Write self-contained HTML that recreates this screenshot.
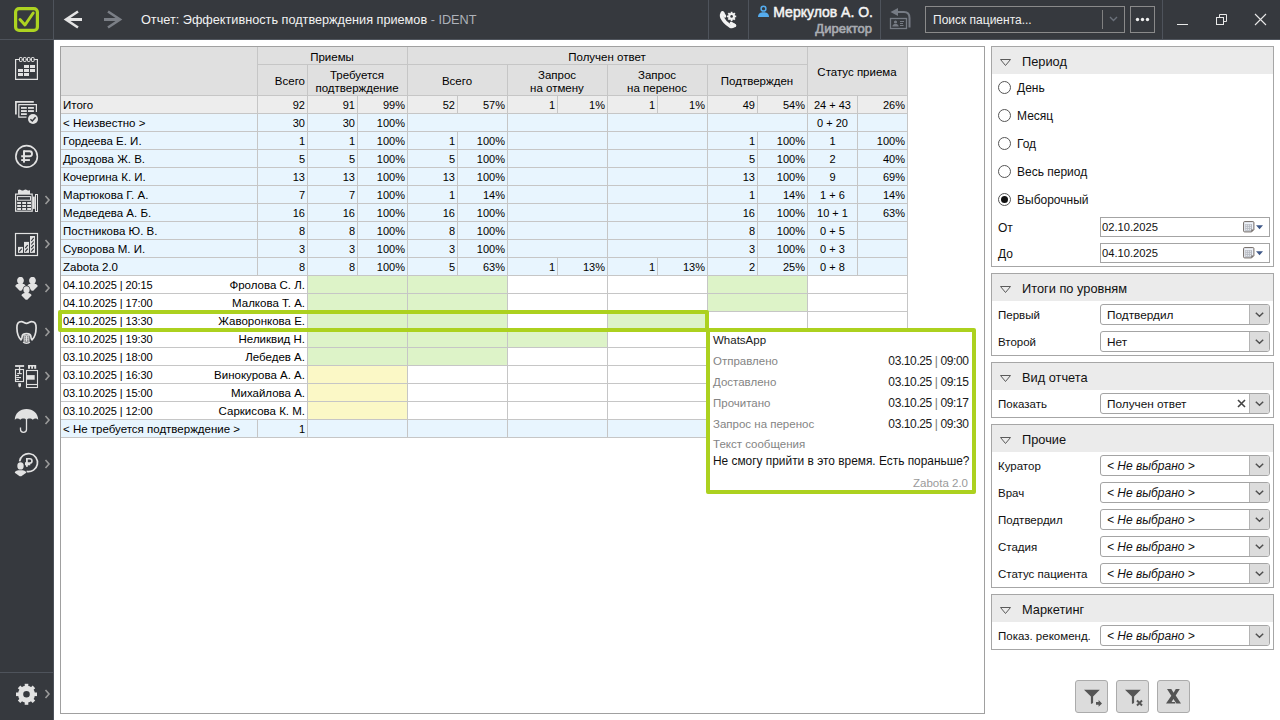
<!DOCTYPE html><html><head><meta charset="utf-8"><style>
*{box-sizing:border-box}
body{margin:0;width:1280px;height:720px;position:relative;overflow:hidden;background:#fff;font-family:"Liberation Sans",sans-serif;color:#000}
.ab{position:absolute}
.t{position:absolute;white-space:nowrap;font-size:11.5px;line-height:17px;height:17px}
.r{text-align:right}
.c{text-align:center}
.hl{position:absolute;height:1px;background:#c6c6c6}
.vl{position:absolute;width:1px;background:#c6c6c6}

</style></head><body>
<div class="ab" style="left:0;top:0;width:1280px;height:40px;background:#36393e"></div>
<div class="ab" style="left:0;top:39px;width:1280px;height:1px;background:#50555d"></div>
<div class="ab" style="left:0;top:40px;width:53px;height:680px;background:#36393e"></div>
<div class="ab" style="left:53px;top:0;width:1px;height:720px;background:#4e535b"></div>
<div class="ab" style="left:0;top:39px;width:53px;height:1px;background:#4e535b"></div>
<div class="ab" style="left:0;top:672px;width:53px;height:1px;background:#4e535b"></div>
<div class="ab" style="left:708px;top:0;width:1px;height:39px;background:#4e535b"></div>
<div class="ab" style="left:748px;top:0;width:1px;height:39px;background:#4e535b"></div>
<div class="ab" style="left:880px;top:0;width:1px;height:39px;background:#4e535b"></div>
<div class="ab" style="left:1162px;top:0;width:1px;height:39px;background:#4e535b"></div>
<svg class="ab" style="left:0;top:0" width="54" height="40" viewBox="0 0 54 40">
<rect x="15.6" y="8.6" width="21.8" height="21.8" rx="3.5" fill="none" stroke="#add321" stroke-width="3.2"/>
<path d="M20 19.5 L25 25 L33.2 13" fill="none" stroke="#add321" stroke-width="3" stroke-linecap="round" stroke-linejoin="round"/>
</svg>
<svg class="ab" style="left:54px;top:0" width="80" height="40" viewBox="54 0 80 40">
<path d="M78 11.5 L66 19.5 L78 27.5" fill="none" stroke="#e4e4e4" stroke-width="2.6"/>
<path d="M66 19.5 H82" stroke="#e4e4e4" stroke-width="3"/>
<path d="M108 11.5 L120 19.5 L108 27.5" fill="none" stroke="#7b7f86" stroke-width="2.6"/>
<path d="M104 19.5 H120" stroke="#7b7f86" stroke-width="3"/>
</svg>
<div class="ab" style="left:141px;top:12px;font-size:12.7px;line-height:17px;white-space:nowrap;color:#f2f2f2">Отчет: Эффективность подтверждения приемов <span style="color:#aeb2ba">- IDENT</span></div>
<svg class="ab" style="left:712px;top:4px" width="32" height="32" viewBox="0 0 32 32">
<path d="M10.8 9.2 C9.6 10.2 9.4 12 10 13.5 C11.5 16.5 14.5 19.8 17.8 21.8 C19.3 22.6 21 22.6 22.2 21.5" fill="none" stroke="#f2f2f2" stroke-width="3.6" stroke-linecap="round"/>
<path d="M10.2 8.6 L12.8 12.2 M22.8 21.6 L19.2 19.2" stroke="#f2f2f2" stroke-width="3" stroke-linecap="round"/>
<g fill="#f2f2f2" transform="translate(19.6 12.4)">
<circle r="3.4"/>
<rect x="-0.9" y="-4.6" width="1.8" height="9.2"/>
<rect x="-0.9" y="-4.6" width="1.8" height="9.2" transform="rotate(45)"/>
<rect x="-0.9" y="-4.6" width="1.8" height="9.2" transform="rotate(90)"/>
<rect x="-0.9" y="-4.6" width="1.8" height="9.2" transform="rotate(135)"/>
</g>
<circle cx="19.6" cy="12.4" r="1.3" fill="#36393e"/>
</svg>
<svg class="ab" style="left:756px;top:4px" width="16" height="15" viewBox="0 0 16 15">
<circle cx="7.5" cy="4.7" r="2.4" fill="none" stroke="#55acee" stroke-width="1.5"/>
<path d="M2 13 C2 9.5 4.5 8.3 7.5 8.3 C10.5 8.3 13 9.5 13 13 Z" fill="#55acee"/>
</svg>
<div class="ab" style="left:773px;top:3.5px;font-size:14px;line-height:17px;white-space:nowrap;color:#f4f4f4;width:100px;text-align:right;-webkit-text-stroke:0.5px #f4f4f4">Меркулов А. О.</div>
<div class="ab" style="left:772px;top:19.5px;font-size:13px;line-height:17px;white-space:nowrap;color:#a9acb2;width:100px;text-align:right;-webkit-text-stroke:0.6px #a9acb2">Директор</div>
<svg class="ab" style="left:884px;top:4px" width="32" height="32" viewBox="0 0 32 32">
<path d="M6.5 8 L14 4 L14 12 Z" fill="#767b84"/>
<path d="M13 8 H20 C23.5 8 25.5 10.5 25.5 14 V23.5" fill="none" stroke="#767b84" stroke-width="2"/>
<rect x="6.5" y="14.5" width="16" height="10" fill="none" stroke="#767b84" stroke-width="1.3"/>
<circle cx="11.5" cy="18" r="1.6" fill="#767b84"/>
<path d="M8.3 22.5 C8.5 20.5 10 20 11.5 20 C13 20 14.5 20.5 14.7 22.5 Z" fill="#767b84"/>
<path d="M16 17.5 H20 M16 19.5 H19 M16 21.5 H19.5" stroke="#767b84" stroke-width="1"/>
</svg>
<div class="ab" style="left:925px;top:6px;width:200px;height:27px;border:1px solid #8a8a8a"></div>
<div class="ab" style="left:933px;top:12px;font-size:12px;line-height:17px;white-space:nowrap;color:#f0f0f0">Поиск пациента...</div>
<div class="ab" style="left:1102px;top:10px;width:1px;height:19px;background:#808080"></div>
<svg class="ab" style="left:1108px;top:15px" width="12" height="8" viewBox="0 0 12 8"><path d="M2 2 L5.5 5.5 L9 2" fill="none" stroke="#6a707a" stroke-width="1.4"/></svg>
<div class="ab" style="left:1130px;top:6px;width:25px;height:27px;border:1px solid #8a8a8a"></div>
<svg class="ab" style="left:1130px;top:6px" width="25" height="27" viewBox="0 0 25 27">
<circle cx="7.5" cy="13.5" r="1.7" fill="#f0f0f0"/><circle cx="12.5" cy="13.5" r="1.7" fill="#f0f0f0"/><circle cx="17.5" cy="13.5" r="1.7" fill="#f0f0f0"/></svg>
<svg class="ab" style="left:1163px;top:0" width="117" height="39" viewBox="1163 0 117 39">
<path d="M1177 24.5 H1188" stroke="#e8e8e8" stroke-width="1"/>
<rect x="1216.5" y="17.5" width="7" height="7" fill="none" stroke="#e8e8e8" stroke-width="1"/>
<path d="M1219.5 17.5 V14.5 H1226.5 V21.5 H1223.5" fill="none" stroke="#e8e8e8" stroke-width="1"/>
<path d="M1255 14 L1266 25 M1266 14 L1255 25" stroke="#e8e8e8" stroke-width="1.1"/>
</svg>
<svg class="ab" style="left:0;top:46px" width="53" height="44" viewBox="0 46 53 44"><g fill="none" stroke="#e2e2e2">
<path d="M19 59.5 H15.6 V79.4 H37.4 V59.5 H34" stroke-width="1.2"/>
<rect x="19.5" y="57.5" width="2.6" height="4" rx="0.6" stroke-width="1"/>
<rect x="23.5" y="57.5" width="2.6" height="4" rx="0.6" stroke-width="1"/>
<rect x="27.5" y="57.5" width="2.6" height="4" rx="0.6" stroke-width="1"/>
<rect x="31.5" y="57.5" width="2.6" height="4" rx="0.6" stroke-width="1"/>
<path d="M22.1 59.5 H23.5 M26.1 59.5 H27.5 M30.1 59.5 H31.5" stroke-width="1"/>
</g>
<g fill="#e2e2e2">
<rect x="24" y="65" width="5" height="3"/><rect x="30" y="65" width="5" height="3"/>
<rect x="18" y="69" width="5" height="3"/><rect x="24" y="69" width="5" height="3"/><rect x="30" y="69" width="5" height="3"/>
<rect x="18" y="73" width="5" height="3"/><rect x="24" y="73" width="5" height="3"/>
</g></svg>
<svg class="ab" style="left:0;top:90px" width="53" height="44" viewBox="0 90 53 44"><path d="M15.9 114.6 V101.9 H33.8" fill="none" stroke="#e2e2e2" stroke-width="1.7"/>
<path d="M26.5 117.2 H18.8 V104.6 H36.4 V112" fill="none" stroke="#e2e2e2" stroke-width="1.2"/>
<g fill="#e2e2e2">
<rect x="21" y="107" width="5.8" height="1.8"/><rect x="28" y="107" width="5.9" height="1.8"/>
<rect x="21" y="110.1" width="5.8" height="1.9"/><rect x="28" y="110.1" width="5.9" height="1.9"/>
<rect x="21" y="113.2" width="5.8" height="1.8"/>
</g>
<circle cx="33" cy="119" r="5.6" fill="#36393e"/>
<circle cx="33" cy="119" r="5" fill="#e2e2e2"/>
<path d="M30.4 119.2 L32.3 121 L35.6 117.3" fill="none" stroke="#36393e" stroke-width="1.5"/></svg>
<svg class="ab" style="left:0;top:134px" width="53" height="44" viewBox="0 134 53 44"><circle cx="26.6" cy="156.4" r="10.75" fill="none" stroke="#e2e2e2" stroke-width="1.6"/>
<rect x="23" y="150.3" width="2" height="12.3" fill="#e2e2e2"/>
<path d="M24 151.25 H29.6 C31.2 151.25 32 152.4 32 153.75 C32 155.1 31.2 156.25 29.6 156.25 H21.2" fill="none" stroke="#e2e2e2" stroke-width="1.9"/>
<rect x="21.2" y="159.1" width="8.7" height="1.9" fill="#e2e2e2"/></svg>
<svg class="ab" style="left:0;top:178px" width="53" height="44" viewBox="0 178 53 44"><path d="M18 194 V190 Q19.5 188.8 21 190 Q22.5 191 24 190 Q25.5 188.8 27 190 Q28.5 191 30 190 V194 Z" fill="#e2e2e2"/>
<g fill="none" stroke="#e2e2e2">
<rect x="15.6" y="194.1" width="16.6" height="17.1" stroke-width="1.2"/>
<rect x="17.5" y="196.6" width="13" height="3.6" stroke-width="1"/>
<rect x="35.5" y="194.5" width="2" height="17" stroke-width="1"/>
</g>
<g fill="#e2e2e2">
<rect x="17.2" y="202" width="3.8" height="2"/><rect x="22.2" y="202" width="3.8" height="2"/><rect x="27.2" y="202" width="3.8" height="2"/>
<rect x="17.2" y="205" width="3.8" height="2"/><rect x="22.2" y="205" width="3.8" height="2"/><rect x="27.2" y="205" width="3.8" height="2"/>
<rect x="17.2" y="208" width="3.8" height="2"/><rect x="22.2" y="208" width="3.8" height="2"/><rect x="27.2" y="208" width="3.8" height="2"/>
<rect x="32.6" y="196.6" width="2.2" height="12.3"/>
</g></svg>
<svg class="ab" style="left:43px;top:193px" width="9" height="14" viewBox="0 0 9 14"><path d="M2.5 3 L6 7 L2.5 11" fill="none" stroke="#9a9a9a" stroke-width="1.6"/></svg>
<svg class="ab" style="left:0;top:222px" width="53" height="44" viewBox="0 222 53 44"><rect x="15.5" y="233.5" width="22" height="22" fill="none" stroke="#e2e2e2" stroke-width="1.2"/>
<rect x="18" y="246.9" width="5" height="6.0" fill="#e2e2e2"/>
<path d="M19.3 251.70 L21.7 248.70" stroke="#36393e" stroke-width="1.2"/>
<rect x="24" y="241.9" width="5" height="11.0" fill="#e2e2e2"/>
<path d="M25.3 251.70 L27.7 248.70 M25.3 248.10 L27.7 245.10" stroke="#36393e" stroke-width="1.2"/>
<rect x="30" y="236" width="5" height="16.9" fill="#e2e2e2"/>
<path d="M31.3 251.70 L33.7 248.70 M31.3 248.10 L33.7 245.10 M31.3 244.50 L33.7 241.50 M31.3 240.90 L33.7 237.90" stroke="#36393e" stroke-width="1.2"/></svg>
<svg class="ab" style="left:43px;top:237px" width="9" height="14" viewBox="0 0 9 14"><path d="M2.5 3 L6 7 L2.5 11" fill="none" stroke="#9a9a9a" stroke-width="1.6"/></svg>
<svg class="ab" style="left:0;top:266px" width="53" height="44" viewBox="0 266 53 44"><g fill="#e2e2e2"><ellipse cx="20.5" cy="280.5" rx="3.1" ry="3.5"/><path d="M15.5 286.3 C15.5 284.3 18.0 283.7 20.5 283.7 C23.0 283.7 25.5 284.3 25.5 286.3 L21.3 290.5 L19.7 290.5 Z"/><ellipse cx="20.5" cy="280.5" rx="3.1" ry="3.5"/><path d="M15.5 286.3 C15.5 284.3 18.0 283.7 20.5 283.7 C23.0 283.7 25.5 284.3 25.5 286.3 L21.3 290.5 L19.7 290.5 Z"/><ellipse cx="32.5" cy="280.5" rx="3.1" ry="3.5"/><path d="M27.5 286.3 C27.5 284.3 30.0 283.7 32.5 283.7 C35.0 283.7 37.5 284.3 37.5 286.3 L33.3 290.5 L31.7 290.5 Z"/><ellipse cx="32.5" cy="280.5" rx="3.1" ry="3.5"/><path d="M27.5 286.3 C27.5 284.3 30.0 283.7 32.5 283.7 C35.0 283.7 37.5 284.3 37.5 286.3 L33.3 290.5 L31.7 290.5 Z"/></g><g fill="#e2e2e2"><ellipse cx="26.5" cy="289.8" rx="3.1" ry="3.5" stroke="#36393e" stroke-width="1.6"/><path d="M21.5 295.6 C21.5 293.6 24.0 293.0 26.5 293.0 C29.0 293.0 31.5 293.6 31.5 295.6 L27.3 299.8 L25.7 299.8 Z" stroke="#36393e" stroke-width="1.6"/><ellipse cx="26.5" cy="289.8" rx="3.1" ry="3.5"/><path d="M21.5 295.6 C21.5 293.6 24.0 293.0 26.5 293.0 C29.0 293.0 31.5 293.6 31.5 295.6 L27.3 299.8 L25.7 299.8 Z"/></g></svg>
<svg class="ab" style="left:43px;top:281px" width="9" height="14" viewBox="0 0 9 14"><path d="M2.5 3 L6 7 L2.5 11" fill="none" stroke="#9a9a9a" stroke-width="1.6"/></svg>
<svg class="ab" style="left:0;top:310px" width="53" height="44" viewBox="0 310 53 44"><path d="M21 340 C19 338 17 333 16.9 328 C16.8 324 18 321.6 21.5 321.6 C23.5 321.6 24.5 323.4 26.5 323.4 C28.5 323.4 29.5 321.6 31.5 321.6 C35 321.6 36.2 324 36.1 328 C36 333 34 338 32 340 C31 339.5 30.9 337 30.8 336 C30.5 334.5 28.8 333.6 26.5 333.6 C24.2 333.6 22.5 334.5 22.2 336 C22.1 337 22 339.5 21 340 Z" fill="none" stroke="#e2e2e2" stroke-width="1.7" stroke-linejoin="round"/>
<rect x="23.6" y="335.2" width="5.8" height="6.6" fill="#e2e2e2"/>
<path d="M23.2 342 C24.5 343.6 28.5 343.6 29.8 342" fill="none" stroke="#e2e2e2" stroke-width="1.4"/>
<g fill="#36393e"><rect x="24.6" y="336.4" width="1.2" height="1"/><rect x="27.2" y="336.4" width="1.2" height="1"/>
<rect x="24.6" y="338.4" width="1.2" height="1"/><rect x="27.2" y="338.4" width="1.2" height="1"/>
<rect x="24.6" y="340.4" width="1.2" height="1"/><rect x="27.2" y="340.4" width="1.2" height="1"/></g></svg>
<svg class="ab" style="left:43px;top:325px" width="9" height="14" viewBox="0 0 9 14"><path d="M2.5 3 L6 7 L2.5 11" fill="none" stroke="#9a9a9a" stroke-width="1.6"/></svg>
<svg class="ab" style="left:0;top:354px" width="53" height="44" viewBox="0 354 53 44"><g fill="#e2e2e2">
<rect x="15.1" y="365.1" width="9" height="1.8"/>
<rect x="18.9" y="366.5" width="1.3" height="7"/>
<rect x="17.2" y="373" width="4.6" height="1.2"/>
<rect x="16.2" y="375" width="2.8" height="1.1"/><rect x="16.2" y="377" width="4.8" height="1.1"/><rect x="16.2" y="379" width="2.8" height="1.1"/>
<path d="M18.3 383.2 H21 V386.2 L19.65 387.6 L18.3 386.2 Z"/>
<path d="M28 365 H36.2 V368.8 H34.2 V366.6 H33 V368.8 H31.2 V366.6 H30 V368.8 H28 Z"/>
<rect x="27" y="375.1" width="7.7" height="4.6"/>
</g>
<g fill="none" stroke="#e2e2e2" stroke-width="1.1">
<rect x="15.5" y="369.5" width="8" height="12"/>
<rect x="26.5" y="370.5" width="11" height="17"/>
<path d="M26.5 384.5 H37.5"/>
</g></svg>
<svg class="ab" style="left:43px;top:369px" width="9" height="14" viewBox="0 0 9 14"><path d="M2.5 3 L6 7 L2.5 11" fill="none" stroke="#9a9a9a" stroke-width="1.6"/></svg>
<svg class="ab" style="left:0;top:398px" width="53" height="44" viewBox="0 398 53 44"><path d="M14.8 420 C14.8 413.5 20 409.1 26.5 409.1 C33 409.1 38.2 413.5 38.2 420 C36.8 418.2 34.3 418 32.8 419.8 C31.3 417.9 28 417.9 26.5 419.8 C25 417.9 21.7 417.9 20.2 419.8 C18.7 418 16.2 418.2 14.8 420 Z" fill="#e2e2e2"/>
<path d="M26.5 419 V429.5 C26.5 431.5 25 432.3 23.5 432.3 C22 432.3 20.5 431.5 20.5 429.5 V427.5" fill="none" stroke="#e2e2e2" stroke-width="1.3"/></svg>
<svg class="ab" style="left:43px;top:413px" width="9" height="14" viewBox="0 0 9 14"><path d="M2.5 3 L6 7 L2.5 11" fill="none" stroke="#9a9a9a" stroke-width="1.6"/></svg>
<svg class="ab" style="left:0;top:442px" width="53" height="44" viewBox="0 442 53 44"><path d="M19.59 461.35 A9.0 9.0 0 1 1 26.63 471.40" fill="none" stroke="#e2e2e2" stroke-width="1.7"/>
<rect x="26" y="458" width="1.8" height="8.8" fill="#e2e2e2"/>
<path d="M26.5 458.8 H29.7 C31.3 458.8 32 459.8 32 460.95 C32 462.1 31.3 463.1 29.7 463.1 H25" fill="none" stroke="#e2e2e2" stroke-width="1.6"/>
<rect x="25" y="463.9" width="5.3" height="1.4" fill="#e2e2e2"/>
<ellipse cx="20.5" cy="465.9" rx="3.2" ry="3.6" fill="#e2e2e2"/>
<path d="M14.8 472.8 C14.8 470.8 17.5 470.2 20.5 470.2 C23.5 470.2 26.2 470.8 26.2 472.8 L21.3 476.2 L19.7 476.2 Z" fill="#e2e2e2"/></svg>
<svg class="ab" style="left:43px;top:457px" width="9" height="14" viewBox="0 0 9 14"><path d="M2.5 3 L6 7 L2.5 11" fill="none" stroke="#9a9a9a" stroke-width="1.6"/></svg>
<svg class="ab" style="left:0;top:672px" width="53" height="48" viewBox="0 672 53 48">
<g fill="#e2e2e2"><rect x="24.7" y="683.8" width="3.6" height="3.5" transform="rotate(0 26.5 694.3)"/><rect x="24.7" y="683.8" width="3.6" height="3.5" transform="rotate(45 26.5 694.3)"/><rect x="24.7" y="683.8" width="3.6" height="3.5" transform="rotate(90 26.5 694.3)"/><rect x="24.7" y="683.8" width="3.6" height="3.5" transform="rotate(135 26.5 694.3)"/><rect x="24.7" y="683.8" width="3.6" height="3.5" transform="rotate(180 26.5 694.3)"/><rect x="24.7" y="683.8" width="3.6" height="3.5" transform="rotate(225 26.5 694.3)"/><rect x="24.7" y="683.8" width="3.6" height="3.5" transform="rotate(270 26.5 694.3)"/><rect x="24.7" y="683.8" width="3.6" height="3.5" transform="rotate(315 26.5 694.3)"/></g>
<circle cx="26.5" cy="694.3" r="5.9" fill="none" stroke="#e2e2e2" stroke-width="5.2"/>
</svg>
<svg class="ab" style="left:43px;top:687px" width="9" height="14" viewBox="0 0 9 14"><path d="M2.5 3 L6 7 L2.5 11" fill="none" stroke="#9a9a9a" stroke-width="1.6"/></svg>
<div class="ab" style="left:54px;top:40px;width:1226px;height:680px;background:#fff"></div>
<div class="ab" style="left:60px;top:46px;width:925px;height:668px;border:1px solid #a0a0a0"></div>
<div class="ab" style="left:61px;top:47px;width:846px;height:48px;background:#e0e0e0"></div>
<div class="ab" style="left:257px;top:64px;width:550px;height:1px;background:#c6c6c6"></div>
<div class="ab" style="left:257px;top:47px;width:1px;height:48px;background:#c6c6c6"></div>
<div class="ab" style="left:407px;top:47px;width:1px;height:48px;background:#c6c6c6"></div>
<div class="ab" style="left:807px;top:47px;width:1px;height:48px;background:#c6c6c6"></div>
<div class="ab" style="left:307px;top:64px;width:1px;height:31px;background:#c6c6c6"></div>
<div class="ab" style="left:507px;top:64px;width:1px;height:31px;background:#c6c6c6"></div>
<div class="ab" style="left:607px;top:64px;width:1px;height:31px;background:#c6c6c6"></div>
<div class="ab" style="left:707px;top:64px;width:1px;height:31px;background:#c6c6c6"></div>
<div class="ab" style="left:907px;top:47px;width:1px;height:391px;background:#c6c6c6"></div>
<div class="ab" style="left:61px;top:95px;width:847px;height:1px;background:#c6c6c6"></div>
<div class="ab" style="left:61px;top:96px;width:846px;height:17px;background:#ededed"></div>
<div class="ab" style="left:257px;top:96px;width:1px;height:17px;background:#c6c6c6"></div>
<div class="ab" style="left:307px;top:96px;width:1px;height:17px;background:#c6c6c6"></div>
<div class="ab" style="left:407px;top:96px;width:1px;height:17px;background:#c6c6c6"></div>
<div class="ab" style="left:357px;top:96px;width:1px;height:17px;background:#c6c6c6"></div>
<div class="ab" style="left:507px;top:96px;width:1px;height:17px;background:#c6c6c6"></div>
<div class="ab" style="left:457px;top:96px;width:1px;height:17px;background:#c6c6c6"></div>
<div class="ab" style="left:607px;top:96px;width:1px;height:17px;background:#c6c6c6"></div>
<div class="ab" style="left:557px;top:96px;width:1px;height:17px;background:#c6c6c6"></div>
<div class="ab" style="left:707px;top:96px;width:1px;height:17px;background:#c6c6c6"></div>
<div class="ab" style="left:657px;top:96px;width:1px;height:17px;background:#c6c6c6"></div>
<div class="ab" style="left:807px;top:96px;width:1px;height:17px;background:#c6c6c6"></div>
<div class="ab" style="left:757px;top:96px;width:1px;height:17px;background:#c6c6c6"></div>
<div class="ab" style="left:907px;top:96px;width:1px;height:17px;background:#c6c6c6"></div>
<div class="ab" style="left:857px;top:96px;width:1px;height:17px;background:#c6c6c6"></div>
<div class="ab" style="left:61px;top:113px;width:847px;height:1px;background:#c6c6c6"></div>
<div class="ab" style="left:61px;top:114px;width:846px;height:17px;background:#e8f5fe"></div>
<div class="ab" style="left:257px;top:114px;width:1px;height:17px;background:#c6c6c6"></div>
<div class="ab" style="left:307px;top:114px;width:1px;height:17px;background:#c6c6c6"></div>
<div class="ab" style="left:407px;top:114px;width:1px;height:17px;background:#c6c6c6"></div>
<div class="ab" style="left:357px;top:114px;width:1px;height:17px;background:#c6c6c6"></div>
<div class="ab" style="left:507px;top:114px;width:1px;height:17px;background:#c6c6c6"></div>
<div class="ab" style="left:607px;top:114px;width:1px;height:17px;background:#c6c6c6"></div>
<div class="ab" style="left:707px;top:114px;width:1px;height:17px;background:#c6c6c6"></div>
<div class="ab" style="left:807px;top:114px;width:1px;height:17px;background:#c6c6c6"></div>
<div class="ab" style="left:907px;top:114px;width:1px;height:17px;background:#c6c6c6"></div>
<div class="ab" style="left:857px;top:114px;width:1px;height:17px;background:#c6c6c6"></div>
<div class="ab" style="left:61px;top:131px;width:847px;height:1px;background:#c6c6c6"></div>
<div class="ab" style="left:61px;top:132px;width:846px;height:17px;background:#e8f5fe"></div>
<div class="ab" style="left:257px;top:132px;width:1px;height:17px;background:#c6c6c6"></div>
<div class="ab" style="left:307px;top:132px;width:1px;height:17px;background:#c6c6c6"></div>
<div class="ab" style="left:407px;top:132px;width:1px;height:17px;background:#c6c6c6"></div>
<div class="ab" style="left:357px;top:132px;width:1px;height:17px;background:#c6c6c6"></div>
<div class="ab" style="left:507px;top:132px;width:1px;height:17px;background:#c6c6c6"></div>
<div class="ab" style="left:457px;top:132px;width:1px;height:17px;background:#c6c6c6"></div>
<div class="ab" style="left:607px;top:132px;width:1px;height:17px;background:#c6c6c6"></div>
<div class="ab" style="left:707px;top:132px;width:1px;height:17px;background:#c6c6c6"></div>
<div class="ab" style="left:807px;top:132px;width:1px;height:17px;background:#c6c6c6"></div>
<div class="ab" style="left:757px;top:132px;width:1px;height:17px;background:#c6c6c6"></div>
<div class="ab" style="left:907px;top:132px;width:1px;height:17px;background:#c6c6c6"></div>
<div class="ab" style="left:857px;top:132px;width:1px;height:17px;background:#c6c6c6"></div>
<div class="ab" style="left:61px;top:149px;width:847px;height:1px;background:#c6c6c6"></div>
<div class="ab" style="left:61px;top:150px;width:846px;height:17px;background:#e8f5fe"></div>
<div class="ab" style="left:257px;top:150px;width:1px;height:17px;background:#c6c6c6"></div>
<div class="ab" style="left:307px;top:150px;width:1px;height:17px;background:#c6c6c6"></div>
<div class="ab" style="left:407px;top:150px;width:1px;height:17px;background:#c6c6c6"></div>
<div class="ab" style="left:357px;top:150px;width:1px;height:17px;background:#c6c6c6"></div>
<div class="ab" style="left:507px;top:150px;width:1px;height:17px;background:#c6c6c6"></div>
<div class="ab" style="left:457px;top:150px;width:1px;height:17px;background:#c6c6c6"></div>
<div class="ab" style="left:607px;top:150px;width:1px;height:17px;background:#c6c6c6"></div>
<div class="ab" style="left:707px;top:150px;width:1px;height:17px;background:#c6c6c6"></div>
<div class="ab" style="left:807px;top:150px;width:1px;height:17px;background:#c6c6c6"></div>
<div class="ab" style="left:757px;top:150px;width:1px;height:17px;background:#c6c6c6"></div>
<div class="ab" style="left:907px;top:150px;width:1px;height:17px;background:#c6c6c6"></div>
<div class="ab" style="left:857px;top:150px;width:1px;height:17px;background:#c6c6c6"></div>
<div class="ab" style="left:61px;top:167px;width:847px;height:1px;background:#c6c6c6"></div>
<div class="ab" style="left:61px;top:168px;width:846px;height:17px;background:#e8f5fe"></div>
<div class="ab" style="left:257px;top:168px;width:1px;height:17px;background:#c6c6c6"></div>
<div class="ab" style="left:307px;top:168px;width:1px;height:17px;background:#c6c6c6"></div>
<div class="ab" style="left:407px;top:168px;width:1px;height:17px;background:#c6c6c6"></div>
<div class="ab" style="left:357px;top:168px;width:1px;height:17px;background:#c6c6c6"></div>
<div class="ab" style="left:507px;top:168px;width:1px;height:17px;background:#c6c6c6"></div>
<div class="ab" style="left:457px;top:168px;width:1px;height:17px;background:#c6c6c6"></div>
<div class="ab" style="left:607px;top:168px;width:1px;height:17px;background:#c6c6c6"></div>
<div class="ab" style="left:707px;top:168px;width:1px;height:17px;background:#c6c6c6"></div>
<div class="ab" style="left:807px;top:168px;width:1px;height:17px;background:#c6c6c6"></div>
<div class="ab" style="left:757px;top:168px;width:1px;height:17px;background:#c6c6c6"></div>
<div class="ab" style="left:907px;top:168px;width:1px;height:17px;background:#c6c6c6"></div>
<div class="ab" style="left:857px;top:168px;width:1px;height:17px;background:#c6c6c6"></div>
<div class="ab" style="left:61px;top:185px;width:847px;height:1px;background:#c6c6c6"></div>
<div class="ab" style="left:61px;top:186px;width:846px;height:17px;background:#e8f5fe"></div>
<div class="ab" style="left:257px;top:186px;width:1px;height:17px;background:#c6c6c6"></div>
<div class="ab" style="left:307px;top:186px;width:1px;height:17px;background:#c6c6c6"></div>
<div class="ab" style="left:407px;top:186px;width:1px;height:17px;background:#c6c6c6"></div>
<div class="ab" style="left:357px;top:186px;width:1px;height:17px;background:#c6c6c6"></div>
<div class="ab" style="left:507px;top:186px;width:1px;height:17px;background:#c6c6c6"></div>
<div class="ab" style="left:457px;top:186px;width:1px;height:17px;background:#c6c6c6"></div>
<div class="ab" style="left:607px;top:186px;width:1px;height:17px;background:#c6c6c6"></div>
<div class="ab" style="left:707px;top:186px;width:1px;height:17px;background:#c6c6c6"></div>
<div class="ab" style="left:807px;top:186px;width:1px;height:17px;background:#c6c6c6"></div>
<div class="ab" style="left:757px;top:186px;width:1px;height:17px;background:#c6c6c6"></div>
<div class="ab" style="left:907px;top:186px;width:1px;height:17px;background:#c6c6c6"></div>
<div class="ab" style="left:857px;top:186px;width:1px;height:17px;background:#c6c6c6"></div>
<div class="ab" style="left:61px;top:203px;width:847px;height:1px;background:#c6c6c6"></div>
<div class="ab" style="left:61px;top:204px;width:846px;height:17px;background:#e8f5fe"></div>
<div class="ab" style="left:257px;top:204px;width:1px;height:17px;background:#c6c6c6"></div>
<div class="ab" style="left:307px;top:204px;width:1px;height:17px;background:#c6c6c6"></div>
<div class="ab" style="left:407px;top:204px;width:1px;height:17px;background:#c6c6c6"></div>
<div class="ab" style="left:357px;top:204px;width:1px;height:17px;background:#c6c6c6"></div>
<div class="ab" style="left:507px;top:204px;width:1px;height:17px;background:#c6c6c6"></div>
<div class="ab" style="left:457px;top:204px;width:1px;height:17px;background:#c6c6c6"></div>
<div class="ab" style="left:607px;top:204px;width:1px;height:17px;background:#c6c6c6"></div>
<div class="ab" style="left:707px;top:204px;width:1px;height:17px;background:#c6c6c6"></div>
<div class="ab" style="left:807px;top:204px;width:1px;height:17px;background:#c6c6c6"></div>
<div class="ab" style="left:757px;top:204px;width:1px;height:17px;background:#c6c6c6"></div>
<div class="ab" style="left:907px;top:204px;width:1px;height:17px;background:#c6c6c6"></div>
<div class="ab" style="left:857px;top:204px;width:1px;height:17px;background:#c6c6c6"></div>
<div class="ab" style="left:61px;top:221px;width:847px;height:1px;background:#c6c6c6"></div>
<div class="ab" style="left:61px;top:222px;width:846px;height:17px;background:#e8f5fe"></div>
<div class="ab" style="left:257px;top:222px;width:1px;height:17px;background:#c6c6c6"></div>
<div class="ab" style="left:307px;top:222px;width:1px;height:17px;background:#c6c6c6"></div>
<div class="ab" style="left:407px;top:222px;width:1px;height:17px;background:#c6c6c6"></div>
<div class="ab" style="left:357px;top:222px;width:1px;height:17px;background:#c6c6c6"></div>
<div class="ab" style="left:507px;top:222px;width:1px;height:17px;background:#c6c6c6"></div>
<div class="ab" style="left:457px;top:222px;width:1px;height:17px;background:#c6c6c6"></div>
<div class="ab" style="left:607px;top:222px;width:1px;height:17px;background:#c6c6c6"></div>
<div class="ab" style="left:707px;top:222px;width:1px;height:17px;background:#c6c6c6"></div>
<div class="ab" style="left:807px;top:222px;width:1px;height:17px;background:#c6c6c6"></div>
<div class="ab" style="left:757px;top:222px;width:1px;height:17px;background:#c6c6c6"></div>
<div class="ab" style="left:907px;top:222px;width:1px;height:17px;background:#c6c6c6"></div>
<div class="ab" style="left:857px;top:222px;width:1px;height:17px;background:#c6c6c6"></div>
<div class="ab" style="left:61px;top:239px;width:847px;height:1px;background:#c6c6c6"></div>
<div class="ab" style="left:61px;top:240px;width:846px;height:17px;background:#e8f5fe"></div>
<div class="ab" style="left:257px;top:240px;width:1px;height:17px;background:#c6c6c6"></div>
<div class="ab" style="left:307px;top:240px;width:1px;height:17px;background:#c6c6c6"></div>
<div class="ab" style="left:407px;top:240px;width:1px;height:17px;background:#c6c6c6"></div>
<div class="ab" style="left:357px;top:240px;width:1px;height:17px;background:#c6c6c6"></div>
<div class="ab" style="left:507px;top:240px;width:1px;height:17px;background:#c6c6c6"></div>
<div class="ab" style="left:457px;top:240px;width:1px;height:17px;background:#c6c6c6"></div>
<div class="ab" style="left:607px;top:240px;width:1px;height:17px;background:#c6c6c6"></div>
<div class="ab" style="left:707px;top:240px;width:1px;height:17px;background:#c6c6c6"></div>
<div class="ab" style="left:807px;top:240px;width:1px;height:17px;background:#c6c6c6"></div>
<div class="ab" style="left:757px;top:240px;width:1px;height:17px;background:#c6c6c6"></div>
<div class="ab" style="left:907px;top:240px;width:1px;height:17px;background:#c6c6c6"></div>
<div class="ab" style="left:857px;top:240px;width:1px;height:17px;background:#c6c6c6"></div>
<div class="ab" style="left:61px;top:257px;width:847px;height:1px;background:#c6c6c6"></div>
<div class="ab" style="left:61px;top:258px;width:846px;height:17px;background:#e8f5fe"></div>
<div class="ab" style="left:257px;top:258px;width:1px;height:17px;background:#c6c6c6"></div>
<div class="ab" style="left:307px;top:258px;width:1px;height:17px;background:#c6c6c6"></div>
<div class="ab" style="left:407px;top:258px;width:1px;height:17px;background:#c6c6c6"></div>
<div class="ab" style="left:357px;top:258px;width:1px;height:17px;background:#c6c6c6"></div>
<div class="ab" style="left:507px;top:258px;width:1px;height:17px;background:#c6c6c6"></div>
<div class="ab" style="left:457px;top:258px;width:1px;height:17px;background:#c6c6c6"></div>
<div class="ab" style="left:607px;top:258px;width:1px;height:17px;background:#c6c6c6"></div>
<div class="ab" style="left:557px;top:258px;width:1px;height:17px;background:#c6c6c6"></div>
<div class="ab" style="left:707px;top:258px;width:1px;height:17px;background:#c6c6c6"></div>
<div class="ab" style="left:657px;top:258px;width:1px;height:17px;background:#c6c6c6"></div>
<div class="ab" style="left:807px;top:258px;width:1px;height:17px;background:#c6c6c6"></div>
<div class="ab" style="left:757px;top:258px;width:1px;height:17px;background:#c6c6c6"></div>
<div class="ab" style="left:907px;top:258px;width:1px;height:17px;background:#c6c6c6"></div>
<div class="ab" style="left:857px;top:258px;width:1px;height:17px;background:#c6c6c6"></div>
<div class="ab" style="left:61px;top:275px;width:847px;height:1px;background:#c6c6c6"></div>
<div class="ab" style="left:307px;top:276px;width:1px;height:17px;background:#c6c6c6"></div>
<div class="ab" style="left:308px;top:276px;width:99px;height:17px;background:#ddf3c8"></div>
<div class="ab" style="left:407px;top:276px;width:1px;height:17px;background:#c6c6c6"></div>
<div class="ab" style="left:408px;top:276px;width:99px;height:17px;background:#ddf3c8"></div>
<div class="ab" style="left:507px;top:276px;width:1px;height:17px;background:#c6c6c6"></div>
<div class="ab" style="left:607px;top:276px;width:1px;height:17px;background:#c6c6c6"></div>
<div class="ab" style="left:707px;top:276px;width:1px;height:17px;background:#c6c6c6"></div>
<div class="ab" style="left:708px;top:276px;width:99px;height:17px;background:#ddf3c8"></div>
<div class="ab" style="left:807px;top:276px;width:1px;height:17px;background:#c6c6c6"></div>
<div class="ab" style="left:907px;top:276px;width:1px;height:17px;background:#c6c6c6"></div>
<div class="ab" style="left:61px;top:293px;width:847px;height:1px;background:#c6c6c6"></div>
<div class="ab" style="left:307px;top:294px;width:1px;height:17px;background:#c6c6c6"></div>
<div class="ab" style="left:308px;top:294px;width:99px;height:17px;background:#ddf3c8"></div>
<div class="ab" style="left:407px;top:294px;width:1px;height:17px;background:#c6c6c6"></div>
<div class="ab" style="left:408px;top:294px;width:99px;height:17px;background:#ddf3c8"></div>
<div class="ab" style="left:507px;top:294px;width:1px;height:17px;background:#c6c6c6"></div>
<div class="ab" style="left:607px;top:294px;width:1px;height:17px;background:#c6c6c6"></div>
<div class="ab" style="left:707px;top:294px;width:1px;height:17px;background:#c6c6c6"></div>
<div class="ab" style="left:708px;top:294px;width:99px;height:17px;background:#ddf3c8"></div>
<div class="ab" style="left:807px;top:294px;width:1px;height:17px;background:#c6c6c6"></div>
<div class="ab" style="left:907px;top:294px;width:1px;height:17px;background:#c6c6c6"></div>
<div class="ab" style="left:61px;top:311px;width:847px;height:1px;background:#c6c6c6"></div>
<div class="ab" style="left:307px;top:312px;width:1px;height:17px;background:#c6c6c6"></div>
<div class="ab" style="left:308px;top:312px;width:99px;height:17px;background:#ddf3c8"></div>
<div class="ab" style="left:407px;top:312px;width:1px;height:17px;background:#c6c6c6"></div>
<div class="ab" style="left:408px;top:312px;width:99px;height:17px;background:#ddf3c8"></div>
<div class="ab" style="left:507px;top:312px;width:1px;height:17px;background:#c6c6c6"></div>
<div class="ab" style="left:607px;top:312px;width:1px;height:17px;background:#c6c6c6"></div>
<div class="ab" style="left:608px;top:312px;width:99px;height:17px;background:#ddf3c8"></div>
<div class="ab" style="left:707px;top:312px;width:1px;height:17px;background:#c6c6c6"></div>
<div class="ab" style="left:807px;top:312px;width:1px;height:17px;background:#c6c6c6"></div>
<div class="ab" style="left:907px;top:312px;width:1px;height:17px;background:#c6c6c6"></div>
<div class="ab" style="left:61px;top:329px;width:847px;height:1px;background:#c6c6c6"></div>
<div class="ab" style="left:307px;top:330px;width:1px;height:17px;background:#c6c6c6"></div>
<div class="ab" style="left:308px;top:330px;width:99px;height:17px;background:#ddf3c8"></div>
<div class="ab" style="left:407px;top:330px;width:1px;height:17px;background:#c6c6c6"></div>
<div class="ab" style="left:408px;top:330px;width:99px;height:17px;background:#ddf3c8"></div>
<div class="ab" style="left:507px;top:330px;width:1px;height:17px;background:#c6c6c6"></div>
<div class="ab" style="left:508px;top:330px;width:99px;height:17px;background:#ddf3c8"></div>
<div class="ab" style="left:607px;top:330px;width:1px;height:17px;background:#c6c6c6"></div>
<div class="ab" style="left:707px;top:330px;width:1px;height:17px;background:#c6c6c6"></div>
<div class="ab" style="left:807px;top:330px;width:1px;height:17px;background:#c6c6c6"></div>
<div class="ab" style="left:907px;top:330px;width:1px;height:17px;background:#c6c6c6"></div>
<div class="ab" style="left:61px;top:347px;width:847px;height:1px;background:#c6c6c6"></div>
<div class="ab" style="left:307px;top:348px;width:1px;height:17px;background:#c6c6c6"></div>
<div class="ab" style="left:308px;top:348px;width:99px;height:17px;background:#ddf3c8"></div>
<div class="ab" style="left:407px;top:348px;width:1px;height:17px;background:#c6c6c6"></div>
<div class="ab" style="left:408px;top:348px;width:99px;height:17px;background:#ddf3c8"></div>
<div class="ab" style="left:507px;top:348px;width:1px;height:17px;background:#c6c6c6"></div>
<div class="ab" style="left:607px;top:348px;width:1px;height:17px;background:#c6c6c6"></div>
<div class="ab" style="left:707px;top:348px;width:1px;height:17px;background:#c6c6c6"></div>
<div class="ab" style="left:807px;top:348px;width:1px;height:17px;background:#c6c6c6"></div>
<div class="ab" style="left:907px;top:348px;width:1px;height:17px;background:#c6c6c6"></div>
<div class="ab" style="left:61px;top:365px;width:847px;height:1px;background:#c6c6c6"></div>
<div class="ab" style="left:307px;top:366px;width:1px;height:17px;background:#c6c6c6"></div>
<div class="ab" style="left:308px;top:366px;width:99px;height:17px;background:#fbf8c6"></div>
<div class="ab" style="left:407px;top:366px;width:1px;height:17px;background:#c6c6c6"></div>
<div class="ab" style="left:507px;top:366px;width:1px;height:17px;background:#c6c6c6"></div>
<div class="ab" style="left:607px;top:366px;width:1px;height:17px;background:#c6c6c6"></div>
<div class="ab" style="left:707px;top:366px;width:1px;height:17px;background:#c6c6c6"></div>
<div class="ab" style="left:807px;top:366px;width:1px;height:17px;background:#c6c6c6"></div>
<div class="ab" style="left:907px;top:366px;width:1px;height:17px;background:#c6c6c6"></div>
<div class="ab" style="left:61px;top:383px;width:847px;height:1px;background:#c6c6c6"></div>
<div class="ab" style="left:307px;top:384px;width:1px;height:17px;background:#c6c6c6"></div>
<div class="ab" style="left:308px;top:384px;width:99px;height:17px;background:#fbf8c6"></div>
<div class="ab" style="left:407px;top:384px;width:1px;height:17px;background:#c6c6c6"></div>
<div class="ab" style="left:507px;top:384px;width:1px;height:17px;background:#c6c6c6"></div>
<div class="ab" style="left:607px;top:384px;width:1px;height:17px;background:#c6c6c6"></div>
<div class="ab" style="left:707px;top:384px;width:1px;height:17px;background:#c6c6c6"></div>
<div class="ab" style="left:807px;top:384px;width:1px;height:17px;background:#c6c6c6"></div>
<div class="ab" style="left:907px;top:384px;width:1px;height:17px;background:#c6c6c6"></div>
<div class="ab" style="left:61px;top:401px;width:847px;height:1px;background:#c6c6c6"></div>
<div class="ab" style="left:307px;top:402px;width:1px;height:17px;background:#c6c6c6"></div>
<div class="ab" style="left:308px;top:402px;width:99px;height:17px;background:#fbf8c6"></div>
<div class="ab" style="left:407px;top:402px;width:1px;height:17px;background:#c6c6c6"></div>
<div class="ab" style="left:507px;top:402px;width:1px;height:17px;background:#c6c6c6"></div>
<div class="ab" style="left:607px;top:402px;width:1px;height:17px;background:#c6c6c6"></div>
<div class="ab" style="left:707px;top:402px;width:1px;height:17px;background:#c6c6c6"></div>
<div class="ab" style="left:807px;top:402px;width:1px;height:17px;background:#c6c6c6"></div>
<div class="ab" style="left:907px;top:402px;width:1px;height:17px;background:#c6c6c6"></div>
<div class="ab" style="left:61px;top:419px;width:847px;height:1px;background:#c6c6c6"></div>
<div class="ab" style="left:61px;top:420px;width:846px;height:17px;background:#e8f5fe"></div>
<div class="ab" style="left:257px;top:420px;width:1px;height:17px;background:#c6c6c6"></div>
<div class="ab" style="left:307px;top:420px;width:1px;height:17px;background:#c6c6c6"></div>
<div class="ab" style="left:407px;top:420px;width:1px;height:17px;background:#c6c6c6"></div>
<div class="ab" style="left:507px;top:420px;width:1px;height:17px;background:#c6c6c6"></div>
<div class="ab" style="left:607px;top:420px;width:1px;height:17px;background:#c6c6c6"></div>
<div class="ab" style="left:707px;top:420px;width:1px;height:17px;background:#c6c6c6"></div>
<div class="ab" style="left:807px;top:420px;width:1px;height:17px;background:#c6c6c6"></div>
<div class="ab" style="left:907px;top:420px;width:1px;height:17px;background:#c6c6c6"></div>
<div class="ab" style="left:61px;top:437px;width:847px;height:1px;background:#c6c6c6"></div>
<div class="t c" style="left:257px;width:150px;top:48.5px;font-size:11.5px;">Приемы</div>
<div class="t c" style="left:407px;width:400px;top:48.5px;font-size:11.5px;">Получен ответ</div>
<div class="t c" style="left:807px;width:100px;top:64px;font-size:11.5px;">Статус приема</div>
<div class="t r" style="left:257px;width:48px;top:72.5px;font-size:11.5px;">Всего</div>
<div class="t c" style="left:307px;width:100px;top:68.5px;line-height:13px;height:28px;white-space:normal">Требуется<br>подтверждение</div>
<div class="t c" style="left:407px;width:100px;top:72.5px;font-size:11.5px;">Всего</div>
<div class="t c" style="left:507px;width:100px;top:68.5px;line-height:13px;height:28px;white-space:normal">Запрос<br>на отмену</div>
<div class="t c" style="left:607px;width:100px;top:68.5px;line-height:13px;height:28px;white-space:normal">Запрос<br>на перенос</div>
<div class="t c" style="left:707px;width:100px;top:72.5px;font-size:11.5px;">Подтвержден</div>
<div class="t" style="left:63px;top:96.5px;font-size:11.5px;">Итого</div>
<div class="t r" style="left:257px;width:48px;top:96.5px;font-size:11px;">92</div>
<div class="t r" style="left:307px;width:48px;top:96.5px;font-size:11px;">91</div>
<div class="t r" style="left:357px;width:48px;top:96.5px;font-size:11px;">99%</div>
<div class="t r" style="left:407px;width:48px;top:96.5px;font-size:11px;">52</div>
<div class="t r" style="left:457px;width:48px;top:96.5px;font-size:11px;">57%</div>
<div class="t r" style="left:507px;width:48px;top:96.5px;font-size:11px;">1</div>
<div class="t r" style="left:557px;width:48px;top:96.5px;font-size:11px;">1%</div>
<div class="t r" style="left:607px;width:48px;top:96.5px;font-size:11px;">1</div>
<div class="t r" style="left:657px;width:48px;top:96.5px;font-size:11px;">1%</div>
<div class="t r" style="left:707px;width:48px;top:96.5px;font-size:11px;">49</div>
<div class="t r" style="left:757px;width:48px;top:96.5px;font-size:11px;">54%</div>
<div class="t c" style="left:808px;width:49px;top:96.5px;font-size:11px;">24 + 43</div>
<div class="t r" style="left:857px;width:48px;top:96.5px;font-size:11px;">26%</div>
<div class="t" style="left:63px;top:114.5px;font-size:11.5px;">&lt; Неизвестно &gt;</div>
<div class="t r" style="left:257px;width:48px;top:114.5px;font-size:11px;">30</div>
<div class="t r" style="left:307px;width:48px;top:114.5px;font-size:11px;">30</div>
<div class="t r" style="left:357px;width:48px;top:114.5px;font-size:11px;">100%</div>
<div class="t c" style="left:808px;width:49px;top:114.5px;font-size:11px;">0 + 20</div>
<div class="t" style="left:63px;top:132.5px;font-size:11.5px;">Гордеева Е. И.</div>
<div class="t r" style="left:257px;width:48px;top:132.5px;font-size:11px;">1</div>
<div class="t r" style="left:307px;width:48px;top:132.5px;font-size:11px;">1</div>
<div class="t r" style="left:357px;width:48px;top:132.5px;font-size:11px;">100%</div>
<div class="t r" style="left:407px;width:48px;top:132.5px;font-size:11px;">1</div>
<div class="t r" style="left:457px;width:48px;top:132.5px;font-size:11px;">100%</div>
<div class="t r" style="left:707px;width:48px;top:132.5px;font-size:11px;">1</div>
<div class="t r" style="left:757px;width:48px;top:132.5px;font-size:11px;">100%</div>
<div class="t c" style="left:808px;width:49px;top:132.5px;font-size:11px;">1</div>
<div class="t r" style="left:857px;width:48px;top:132.5px;font-size:11px;">100%</div>
<div class="t" style="left:63px;top:150.5px;font-size:11.5px;">Дроздова Ж. В.</div>
<div class="t r" style="left:257px;width:48px;top:150.5px;font-size:11px;">5</div>
<div class="t r" style="left:307px;width:48px;top:150.5px;font-size:11px;">5</div>
<div class="t r" style="left:357px;width:48px;top:150.5px;font-size:11px;">100%</div>
<div class="t r" style="left:407px;width:48px;top:150.5px;font-size:11px;">5</div>
<div class="t r" style="left:457px;width:48px;top:150.5px;font-size:11px;">100%</div>
<div class="t r" style="left:707px;width:48px;top:150.5px;font-size:11px;">5</div>
<div class="t r" style="left:757px;width:48px;top:150.5px;font-size:11px;">100%</div>
<div class="t c" style="left:808px;width:49px;top:150.5px;font-size:11px;">2</div>
<div class="t r" style="left:857px;width:48px;top:150.5px;font-size:11px;">40%</div>
<div class="t" style="left:63px;top:168.5px;font-size:11.5px;">Кочергина К. И.</div>
<div class="t r" style="left:257px;width:48px;top:168.5px;font-size:11px;">13</div>
<div class="t r" style="left:307px;width:48px;top:168.5px;font-size:11px;">13</div>
<div class="t r" style="left:357px;width:48px;top:168.5px;font-size:11px;">100%</div>
<div class="t r" style="left:407px;width:48px;top:168.5px;font-size:11px;">13</div>
<div class="t r" style="left:457px;width:48px;top:168.5px;font-size:11px;">100%</div>
<div class="t r" style="left:707px;width:48px;top:168.5px;font-size:11px;">13</div>
<div class="t r" style="left:757px;width:48px;top:168.5px;font-size:11px;">100%</div>
<div class="t c" style="left:808px;width:49px;top:168.5px;font-size:11px;">9</div>
<div class="t r" style="left:857px;width:48px;top:168.5px;font-size:11px;">69%</div>
<div class="t" style="left:63px;top:186.5px;font-size:11.5px;">Мартюкова Г. А.</div>
<div class="t r" style="left:257px;width:48px;top:186.5px;font-size:11px;">7</div>
<div class="t r" style="left:307px;width:48px;top:186.5px;font-size:11px;">7</div>
<div class="t r" style="left:357px;width:48px;top:186.5px;font-size:11px;">100%</div>
<div class="t r" style="left:407px;width:48px;top:186.5px;font-size:11px;">1</div>
<div class="t r" style="left:457px;width:48px;top:186.5px;font-size:11px;">14%</div>
<div class="t r" style="left:707px;width:48px;top:186.5px;font-size:11px;">1</div>
<div class="t r" style="left:757px;width:48px;top:186.5px;font-size:11px;">14%</div>
<div class="t c" style="left:808px;width:49px;top:186.5px;font-size:11px;">1 + 6</div>
<div class="t r" style="left:857px;width:48px;top:186.5px;font-size:11px;">14%</div>
<div class="t" style="left:63px;top:204.5px;font-size:11.5px;">Медведева А. Б.</div>
<div class="t r" style="left:257px;width:48px;top:204.5px;font-size:11px;">16</div>
<div class="t r" style="left:307px;width:48px;top:204.5px;font-size:11px;">16</div>
<div class="t r" style="left:357px;width:48px;top:204.5px;font-size:11px;">100%</div>
<div class="t r" style="left:407px;width:48px;top:204.5px;font-size:11px;">16</div>
<div class="t r" style="left:457px;width:48px;top:204.5px;font-size:11px;">100%</div>
<div class="t r" style="left:707px;width:48px;top:204.5px;font-size:11px;">16</div>
<div class="t r" style="left:757px;width:48px;top:204.5px;font-size:11px;">100%</div>
<div class="t c" style="left:808px;width:49px;top:204.5px;font-size:11px;">10 + 1</div>
<div class="t r" style="left:857px;width:48px;top:204.5px;font-size:11px;">63%</div>
<div class="t" style="left:63px;top:222.5px;font-size:11.5px;">Постникова Ю. В.</div>
<div class="t r" style="left:257px;width:48px;top:222.5px;font-size:11px;">8</div>
<div class="t r" style="left:307px;width:48px;top:222.5px;font-size:11px;">8</div>
<div class="t r" style="left:357px;width:48px;top:222.5px;font-size:11px;">100%</div>
<div class="t r" style="left:407px;width:48px;top:222.5px;font-size:11px;">8</div>
<div class="t r" style="left:457px;width:48px;top:222.5px;font-size:11px;">100%</div>
<div class="t r" style="left:707px;width:48px;top:222.5px;font-size:11px;">8</div>
<div class="t r" style="left:757px;width:48px;top:222.5px;font-size:11px;">100%</div>
<div class="t c" style="left:808px;width:49px;top:222.5px;font-size:11px;">0 + 5</div>
<div class="t" style="left:63px;top:240.5px;font-size:11.5px;">Суворова М. И.</div>
<div class="t r" style="left:257px;width:48px;top:240.5px;font-size:11px;">3</div>
<div class="t r" style="left:307px;width:48px;top:240.5px;font-size:11px;">3</div>
<div class="t r" style="left:357px;width:48px;top:240.5px;font-size:11px;">100%</div>
<div class="t r" style="left:407px;width:48px;top:240.5px;font-size:11px;">3</div>
<div class="t r" style="left:457px;width:48px;top:240.5px;font-size:11px;">100%</div>
<div class="t r" style="left:707px;width:48px;top:240.5px;font-size:11px;">3</div>
<div class="t r" style="left:757px;width:48px;top:240.5px;font-size:11px;">100%</div>
<div class="t c" style="left:808px;width:49px;top:240.5px;font-size:11px;">0 + 3</div>
<div class="t" style="left:63px;top:258.5px;font-size:11.5px;">Zabota 2.0</div>
<div class="t r" style="left:257px;width:48px;top:258.5px;font-size:11px;">8</div>
<div class="t r" style="left:307px;width:48px;top:258.5px;font-size:11px;">8</div>
<div class="t r" style="left:357px;width:48px;top:258.5px;font-size:11px;">100%</div>
<div class="t r" style="left:407px;width:48px;top:258.5px;font-size:11px;">5</div>
<div class="t r" style="left:457px;width:48px;top:258.5px;font-size:11px;">63%</div>
<div class="t r" style="left:507px;width:48px;top:258.5px;font-size:11px;">1</div>
<div class="t r" style="left:557px;width:48px;top:258.5px;font-size:11px;">13%</div>
<div class="t r" style="left:607px;width:48px;top:258.5px;font-size:11px;">1</div>
<div class="t r" style="left:657px;width:48px;top:258.5px;font-size:11px;">13%</div>
<div class="t r" style="left:707px;width:48px;top:258.5px;font-size:11px;">2</div>
<div class="t r" style="left:757px;width:48px;top:258.5px;font-size:11px;">25%</div>
<div class="t c" style="left:808px;width:49px;top:258.5px;font-size:11px;">0 + 8</div>
<div class="t" style="left:63px;top:276.5px;font-size:11px;letter-spacing:-0.12px">04.10.2025 | 20:15</div>
<div class="t r" style="left:150px;width:155px;top:276.5px;font-size:11.5px;">Фролова С. Л.</div>
<div class="t" style="left:63px;top:294.5px;font-size:11px;letter-spacing:-0.12px">04.10.2025 | 17:00</div>
<div class="t r" style="left:150px;width:155px;top:294.5px;font-size:11.5px;">Малкова Т. А.</div>
<div class="t" style="left:63px;top:312.5px;font-size:11px;letter-spacing:-0.12px">04.10.2025 | 13:30</div>
<div class="t r" style="left:150px;width:155px;top:312.5px;font-size:11.5px;">Жаворонкова Е.</div>
<div class="t" style="left:63px;top:330.5px;font-size:11px;letter-spacing:-0.12px">03.10.2025 | 19:30</div>
<div class="t r" style="left:150px;width:155px;top:330.5px;font-size:11.5px;">Неликвид Н.</div>
<div class="t" style="left:63px;top:348.5px;font-size:11px;letter-spacing:-0.12px">03.10.2025 | 18:00</div>
<div class="t r" style="left:150px;width:155px;top:348.5px;font-size:11.5px;">Лебедев А.</div>
<div class="t" style="left:63px;top:366.5px;font-size:11px;letter-spacing:-0.12px">03.10.2025 | 16:30</div>
<div class="t r" style="left:150px;width:155px;top:366.5px;font-size:11.5px;">Винокурова А. А.</div>
<div class="t" style="left:63px;top:384.5px;font-size:11px;letter-spacing:-0.12px">03.10.2025 | 15:00</div>
<div class="t r" style="left:150px;width:155px;top:384.5px;font-size:11.5px;">Михайлова А.</div>
<div class="t" style="left:63px;top:402.5px;font-size:11px;letter-spacing:-0.12px">03.10.2025 | 12:00</div>
<div class="t r" style="left:150px;width:155px;top:402.5px;font-size:11.5px;">Саркисова К. М.</div>
<div class="t" style="left:63px;top:420.5px;font-size:11.5px;">&lt; Не требуется подтверждение &gt;</div>
<div class="t r" style="left:257px;width:48px;top:420.5px;font-size:11px;">1</div>
<div class="ab" style="left:58px;top:310px;width:651px;height:22px;border:4px solid #acd11f;border-radius:2px"></div>
<div class="ab" style="left:706px;top:328px;width:270px;height:166px;border:4px solid #acd11f;border-radius:2px;background:#fff"></div>
<div class="t" style="left:713px;top:331.5px;font-size:11.5px;color:#1a1a1a">WhatsApp</div>
<div class="t" style="left:713px;top:352.5px;font-size:11.5px;color:#848484">Отправлено</div>
<div class="t r" style="left:768.5px;width:200px;top:352.5px;font-size:12px;color:#1a1a1a"><span style="letter-spacing:-0.4px">03.10.25 <span style="color:#777">|</span> 09:00</span></div>
<div class="t" style="left:713px;top:373.5px;font-size:11.5px;color:#848484">Доставлено</div>
<div class="t r" style="left:768.5px;width:200px;top:373.5px;font-size:12px;color:#1a1a1a"><span style="letter-spacing:-0.4px">03.10.25 <span style="color:#777">|</span> 09:15</span></div>
<div class="t" style="left:713px;top:394.5px;font-size:11.5px;color:#848484">Прочитано</div>
<div class="t r" style="left:768.5px;width:200px;top:394.5px;font-size:12px;color:#1a1a1a"><span style="letter-spacing:-0.4px">03.10.25 <span style="color:#777">|</span> 09:17</span></div>
<div class="t" style="left:713px;top:415.5px;font-size:11.5px;color:#848484">Запрос на перенос</div>
<div class="t r" style="left:768.5px;width:200px;top:415.5px;font-size:12px;color:#1a1a1a"><span style="letter-spacing:-0.4px">03.10.25 <span style="color:#777">|</span> 09:30</span></div>
<div class="t" style="left:713px;top:435.5px;font-size:11.5px;color:#848484">Текст сообщения</div>
<div class="t" style="left:713px;top:452.5px;font-size:11.9px;color:#111">Не смогу прийти в это время. Есть пораньше?</div>
<div class="t r" style="left:768px;width:200px;top:474.5px;font-size:11.5px;color:#9a9a9a">Zabota 2.0</div>
<div class="ab" style="left:991px;top:46px;width:283px;height:221px;border:1px solid #a6a6a6"></div>
<div class="ab" style="left:992px;top:47px;width:281px;height:27px;background:#ebebeb"></div>
<svg class="ab" style="left:999px;top:58px" width="13" height="9" viewBox="0 0 13 9"><path d="M1.5 1.5 H11.5 L6.5 7.5 Z" fill="none" stroke="#5a5a5a" stroke-width="1"/></svg>
<div class="t" style="left:1022px;top:53px;font-size:12.8px;color:#111">Период</div>
<svg class="ab" style="left:997px;top:80.0px" width="15" height="15" viewBox="0 0 15 15"><circle cx="7.5" cy="7.5" r="6" fill="#fff" stroke="#555" stroke-width="1"/></svg>
<div class="t" style="left:1017px;top:79.5px;font-size:12px;color:#111">День</div>
<svg class="ab" style="left:997px;top:108.0px" width="15" height="15" viewBox="0 0 15 15"><circle cx="7.5" cy="7.5" r="6" fill="#fff" stroke="#555" stroke-width="1"/></svg>
<div class="t" style="left:1017px;top:107.5px;font-size:12px;color:#111">Месяц</div>
<svg class="ab" style="left:997px;top:136.0px" width="15" height="15" viewBox="0 0 15 15"><circle cx="7.5" cy="7.5" r="6" fill="#fff" stroke="#555" stroke-width="1"/></svg>
<div class="t" style="left:1017px;top:135.5px;font-size:12px;color:#111">Год</div>
<svg class="ab" style="left:997px;top:164.0px" width="15" height="15" viewBox="0 0 15 15"><circle cx="7.5" cy="7.5" r="6" fill="#fff" stroke="#555" stroke-width="1"/></svg>
<div class="t" style="left:1017px;top:163.5px;font-size:12px;color:#111">Весь период</div>
<svg class="ab" style="left:997px;top:192.0px" width="15" height="15" viewBox="0 0 15 15"><circle cx="7.5" cy="7.5" r="6" fill="#fff" stroke="#555" stroke-width="1"/><circle cx="7.5" cy="7.5" r="3.5" fill="#111"/></svg>
<div class="t" style="left:1017px;top:191.5px;font-size:12px;color:#111">Выборочный</div>
<div class="t" style="left:998px;top:220px;font-size:12px;color:#111">От</div>
<div class="ab" style="left:1100px;top:217px;width:170px;height:20px;border:1px solid #a4a4a4;background:#fff"></div>
<div class="t" style="left:1102px;top:218.5px;font-size:11.2px;color:#111">02.10.2025</div>
<svg class="ab" style="left:1242px;top:220px" width="24" height="14" viewBox="0 0 24 14">
<path d="M2.6 1.6 H10.9 Q11.9 1.6 11.9 2.6 V9.6 L9.6 11.9 H2.6 Q1.6 11.9 1.6 10.9 V2.6 Q1.6 1.6 2.6 1.6 Z" fill="#eef2f9" stroke="#6e6662" stroke-width="1"/>
<rect x="3.1" y="4.1" width="6.9" height="6.7" fill="#b4b8c0"/>
<g fill="#f4f6fa"><rect x="3.70" y="4.70" width="1.1" height="1.1"/><rect x="3.70" y="6.75" width="1.1" height="1.1"/><rect x="3.70" y="8.80" width="1.1" height="1.1"/><rect x="5.75" y="4.70" width="1.1" height="1.1"/><rect x="5.75" y="6.75" width="1.1" height="1.1"/><rect x="5.75" y="8.80" width="1.1" height="1.1"/><rect x="7.80" y="4.70" width="1.1" height="1.1"/><rect x="7.80" y="6.75" width="1.1" height="1.1"/><rect x="7.80" y="8.80" width="1.1" height="1.1"/></g>
<path d="M9.4 12 L12 9.4 L9.4 9.4 Z" fill="#6e6662"/>
<path d="M14 5.2 H21 L17.5 9.3 Z" fill="#3f5888"/></svg>
<div class="t" style="left:998px;top:246px;font-size:12px;color:#111">До</div>
<div class="ab" style="left:1100px;top:243px;width:170px;height:20px;border:1px solid #a4a4a4;background:#fff"></div>
<div class="t" style="left:1102px;top:244.5px;font-size:11.2px;color:#111">04.10.2025</div>
<svg class="ab" style="left:1242px;top:246px" width="24" height="14" viewBox="0 0 24 14">
<path d="M2.6 1.6 H10.9 Q11.9 1.6 11.9 2.6 V9.6 L9.6 11.9 H2.6 Q1.6 11.9 1.6 10.9 V2.6 Q1.6 1.6 2.6 1.6 Z" fill="#eef2f9" stroke="#6e6662" stroke-width="1"/>
<rect x="3.1" y="4.1" width="6.9" height="6.7" fill="#b4b8c0"/>
<g fill="#f4f6fa"><rect x="3.70" y="4.70" width="1.1" height="1.1"/><rect x="3.70" y="6.75" width="1.1" height="1.1"/><rect x="3.70" y="8.80" width="1.1" height="1.1"/><rect x="5.75" y="4.70" width="1.1" height="1.1"/><rect x="5.75" y="6.75" width="1.1" height="1.1"/><rect x="5.75" y="8.80" width="1.1" height="1.1"/><rect x="7.80" y="4.70" width="1.1" height="1.1"/><rect x="7.80" y="6.75" width="1.1" height="1.1"/><rect x="7.80" y="8.80" width="1.1" height="1.1"/></g>
<path d="M9.4 12 L12 9.4 L9.4 9.4 Z" fill="#6e6662"/>
<path d="M14 5.2 H21 L17.5 9.3 Z" fill="#3f5888"/></svg>
<div class="ab" style="left:991px;top:273px;width:283px;height:83px;border:1px solid #a6a6a6"></div>
<div class="ab" style="left:992px;top:274px;width:281px;height:27px;background:#ebebeb"></div>
<svg class="ab" style="left:999px;top:285px" width="13" height="9" viewBox="0 0 13 9"><path d="M1.5 1.5 H11.5 L6.5 7.5 Z" fill="none" stroke="#5a5a5a" stroke-width="1"/></svg>
<div class="t" style="left:1022px;top:280px;font-size:12.8px;color:#111">Итоги по уровням</div>
<div class="t" style="left:998px;top:307px;font-size:11.5px;color:#111">Первый</div>
<div class="ab" style="left:1100px;top:304px;width:170px;height:21px;border:1px solid #a4a4a4;border-radius:3px;background:#fff;overflow:hidden"><div class="ab" style="left:148px;top:0;width:20px;height:19px;background:#dcdcdc;border-left:1px solid #b4b4b4"></div></div>
<svg class="ab" style="left:1254px;top:311px" width="11" height="8" viewBox="0 0 11 8"><path d="M1.8 1.8 L5.5 5.3 L9.2 1.8" fill="none" stroke="#505050" stroke-width="1.5"/></svg>
<div class="t" style="left:1107px;top:307px;font-size:11.8px;color:#111">Подтвердил</div>
<div class="t" style="left:998px;top:334px;font-size:11.5px;color:#111">Второй</div>
<div class="ab" style="left:1100px;top:331px;width:170px;height:21px;border:1px solid #a4a4a4;border-radius:3px;background:#fff;overflow:hidden"><div class="ab" style="left:148px;top:0;width:20px;height:19px;background:#dcdcdc;border-left:1px solid #b4b4b4"></div></div>
<svg class="ab" style="left:1254px;top:338px" width="11" height="8" viewBox="0 0 11 8"><path d="M1.8 1.8 L5.5 5.3 L9.2 1.8" fill="none" stroke="#505050" stroke-width="1.5"/></svg>
<div class="t" style="left:1107px;top:334px;font-size:11.8px;color:#111">Нет</div>
<div class="ab" style="left:991px;top:362px;width:283px;height:56px;border:1px solid #a6a6a6"></div>
<div class="ab" style="left:992px;top:363px;width:281px;height:27px;background:#ebebeb"></div>
<svg class="ab" style="left:999px;top:374px" width="13" height="9" viewBox="0 0 13 9"><path d="M1.5 1.5 H11.5 L6.5 7.5 Z" fill="none" stroke="#5a5a5a" stroke-width="1"/></svg>
<div class="t" style="left:1022px;top:369px;font-size:12.8px;color:#111">Вид отчета</div>
<div class="t" style="left:998px;top:396px;font-size:11.5px;color:#111">Показать</div>
<div class="ab" style="left:1100px;top:393px;width:170px;height:21px;border:1px solid #a4a4a4;border-radius:3px;background:#fff;overflow:hidden"><div class="ab" style="left:148px;top:0;width:20px;height:19px;background:#dcdcdc;border-left:1px solid #b4b4b4"></div></div>
<svg class="ab" style="left:1254px;top:400px" width="11" height="8" viewBox="0 0 11 8"><path d="M1.8 1.8 L5.5 5.3 L9.2 1.8" fill="none" stroke="#505050" stroke-width="1.5"/></svg>
<div class="t" style="left:1107px;top:396px;font-size:11.8px;color:#111">Получен ответ</div>
<svg class="ab" style="left:1237px;top:399px" width="9" height="9" viewBox="0 0 9 9"><path d="M1 1 L8 8 M8 1 L1 8" stroke="#444" stroke-width="1.6"/></svg>
<div class="ab" style="left:991px;top:424px;width:283px;height:164px;border:1px solid #a6a6a6"></div>
<div class="ab" style="left:992px;top:425px;width:281px;height:27px;background:#ebebeb"></div>
<svg class="ab" style="left:999px;top:436px" width="13" height="9" viewBox="0 0 13 9"><path d="M1.5 1.5 H11.5 L6.5 7.5 Z" fill="none" stroke="#5a5a5a" stroke-width="1"/></svg>
<div class="t" style="left:1022px;top:431px;font-size:12.8px;color:#111">Прочие</div>
<div class="t" style="left:998px;top:458px;font-size:11.5px;color:#111">Куратор</div>
<div class="ab" style="left:1100px;top:455px;width:170px;height:21px;border:1px solid #a4a4a4;border-radius:3px;background:#fff;overflow:hidden"><div class="ab" style="left:148px;top:0;width:20px;height:19px;background:#dcdcdc;border-left:1px solid #b4b4b4"></div></div>
<svg class="ab" style="left:1254px;top:462px" width="11" height="8" viewBox="0 0 11 8"><path d="M1.8 1.8 L5.5 5.3 L9.2 1.8" fill="none" stroke="#505050" stroke-width="1.5"/></svg>
<div class="t" style="left:1107px;top:458px;font-style:italic;font-size:12px;color:#111">&lt; Не выбрано &gt;</div>
<div class="t" style="left:998px;top:485px;font-size:11.5px;color:#111">Врач</div>
<div class="ab" style="left:1100px;top:482px;width:170px;height:21px;border:1px solid #a4a4a4;border-radius:3px;background:#fff;overflow:hidden"><div class="ab" style="left:148px;top:0;width:20px;height:19px;background:#dcdcdc;border-left:1px solid #b4b4b4"></div></div>
<svg class="ab" style="left:1254px;top:489px" width="11" height="8" viewBox="0 0 11 8"><path d="M1.8 1.8 L5.5 5.3 L9.2 1.8" fill="none" stroke="#505050" stroke-width="1.5"/></svg>
<div class="t" style="left:1107px;top:485px;font-style:italic;font-size:12px;color:#111">&lt; Не выбрано &gt;</div>
<div class="t" style="left:998px;top:512px;font-size:11.5px;color:#111">Подтвердил</div>
<div class="ab" style="left:1100px;top:509px;width:170px;height:21px;border:1px solid #a4a4a4;border-radius:3px;background:#fff;overflow:hidden"><div class="ab" style="left:148px;top:0;width:20px;height:19px;background:#dcdcdc;border-left:1px solid #b4b4b4"></div></div>
<svg class="ab" style="left:1254px;top:516px" width="11" height="8" viewBox="0 0 11 8"><path d="M1.8 1.8 L5.5 5.3 L9.2 1.8" fill="none" stroke="#505050" stroke-width="1.5"/></svg>
<div class="t" style="left:1107px;top:512px;font-style:italic;font-size:12px;color:#111">&lt; Не выбрано &gt;</div>
<div class="t" style="left:998px;top:539px;font-size:11.5px;color:#111">Стадия</div>
<div class="ab" style="left:1100px;top:536px;width:170px;height:21px;border:1px solid #a4a4a4;border-radius:3px;background:#fff;overflow:hidden"><div class="ab" style="left:148px;top:0;width:20px;height:19px;background:#dcdcdc;border-left:1px solid #b4b4b4"></div></div>
<svg class="ab" style="left:1254px;top:543px" width="11" height="8" viewBox="0 0 11 8"><path d="M1.8 1.8 L5.5 5.3 L9.2 1.8" fill="none" stroke="#505050" stroke-width="1.5"/></svg>
<div class="t" style="left:1107px;top:539px;font-style:italic;font-size:12px;color:#111">&lt; Не выбрано &gt;</div>
<div class="t" style="left:998px;top:566px;font-size:11.5px;color:#111">Статус пациента</div>
<div class="ab" style="left:1100px;top:563px;width:170px;height:21px;border:1px solid #a4a4a4;border-radius:3px;background:#fff;overflow:hidden"><div class="ab" style="left:148px;top:0;width:20px;height:19px;background:#dcdcdc;border-left:1px solid #b4b4b4"></div></div>
<svg class="ab" style="left:1254px;top:570px" width="11" height="8" viewBox="0 0 11 8"><path d="M1.8 1.8 L5.5 5.3 L9.2 1.8" fill="none" stroke="#505050" stroke-width="1.5"/></svg>
<div class="t" style="left:1107px;top:566px;font-style:italic;font-size:12px;color:#111">&lt; Не выбрано &gt;</div>
<div class="ab" style="left:991px;top:594px;width:283px;height:56px;border:1px solid #a6a6a6"></div>
<div class="ab" style="left:992px;top:595px;width:281px;height:27px;background:#ebebeb"></div>
<svg class="ab" style="left:999px;top:606px" width="13" height="9" viewBox="0 0 13 9"><path d="M1.5 1.5 H11.5 L6.5 7.5 Z" fill="none" stroke="#5a5a5a" stroke-width="1"/></svg>
<div class="t" style="left:1022px;top:601px;font-size:12.8px;color:#111">Маркетинг</div>
<div class="t" style="left:998px;top:628px;font-size:11.5px;color:#111">Показ. рекоменд.</div>
<div class="ab" style="left:1100px;top:625px;width:170px;height:21px;border:1px solid #a4a4a4;border-radius:3px;background:#fff;overflow:hidden"><div class="ab" style="left:148px;top:0;width:20px;height:19px;background:#dcdcdc;border-left:1px solid #b4b4b4"></div></div>
<svg class="ab" style="left:1254px;top:632px" width="11" height="8" viewBox="0 0 11 8"><path d="M1.8 1.8 L5.5 5.3 L9.2 1.8" fill="none" stroke="#505050" stroke-width="1.5"/></svg>
<div class="t" style="left:1107px;top:628px;font-style:italic;font-size:12px;color:#111">&lt; Не выбрано &gt;</div>
<div class="ab" style="left:1075px;top:680px;width:33px;height:33px;border:1px solid #ababab;border-radius:3px;background:#dcdcdc"></div>
<div class="ab" style="left:1116px;top:680px;width:33px;height:33px;border:1px solid #ababab;border-radius:3px;background:#dcdcdc"></div>
<div class="ab" style="left:1157px;top:680px;width:33px;height:33px;border:1px solid #ababab;border-radius:3px;background:#dcdcdc"></div>
<svg class="ab" style="left:1075px;top:680px" width="33" height="33" viewBox="0 0 33 33">
<path d="M9 9.8 H24.8 L18.1 16.6 V22.8 L17 23.7 H15.9 V16.6 Z" fill="#555"/>
<path d="M21 22 H23.6 V20 L27 23.4 L23.6 26.8 V24.8 H21 Z" fill="#555"/></svg>
<svg class="ab" style="left:1116px;top:680px" width="33" height="33" viewBox="0 0 33 33">
<path d="M9 9.8 H24.8 L18.1 16.6 V22.8 L17 23.7 H15.9 V16.6 Z" fill="#555"/>
<path d="M21 20.5 L26 25.5 M26 20.5 L21 25.5" stroke="#555" stroke-width="2"/></svg>
<svg class="ab" style="left:1157px;top:680px" width="33" height="33" viewBox="0 0 33 33">
<path d="M10 9 H14.3 L16.6 12.8 L18.8 9 H22.8 L18.7 15.6 L24 23.6 H19.4 L16.4 18.9 L14.6 21.9 H17.9 L18.4 23.6 H9 L14.3 15.7 Z" fill="#555"/></svg>
</body></html>
